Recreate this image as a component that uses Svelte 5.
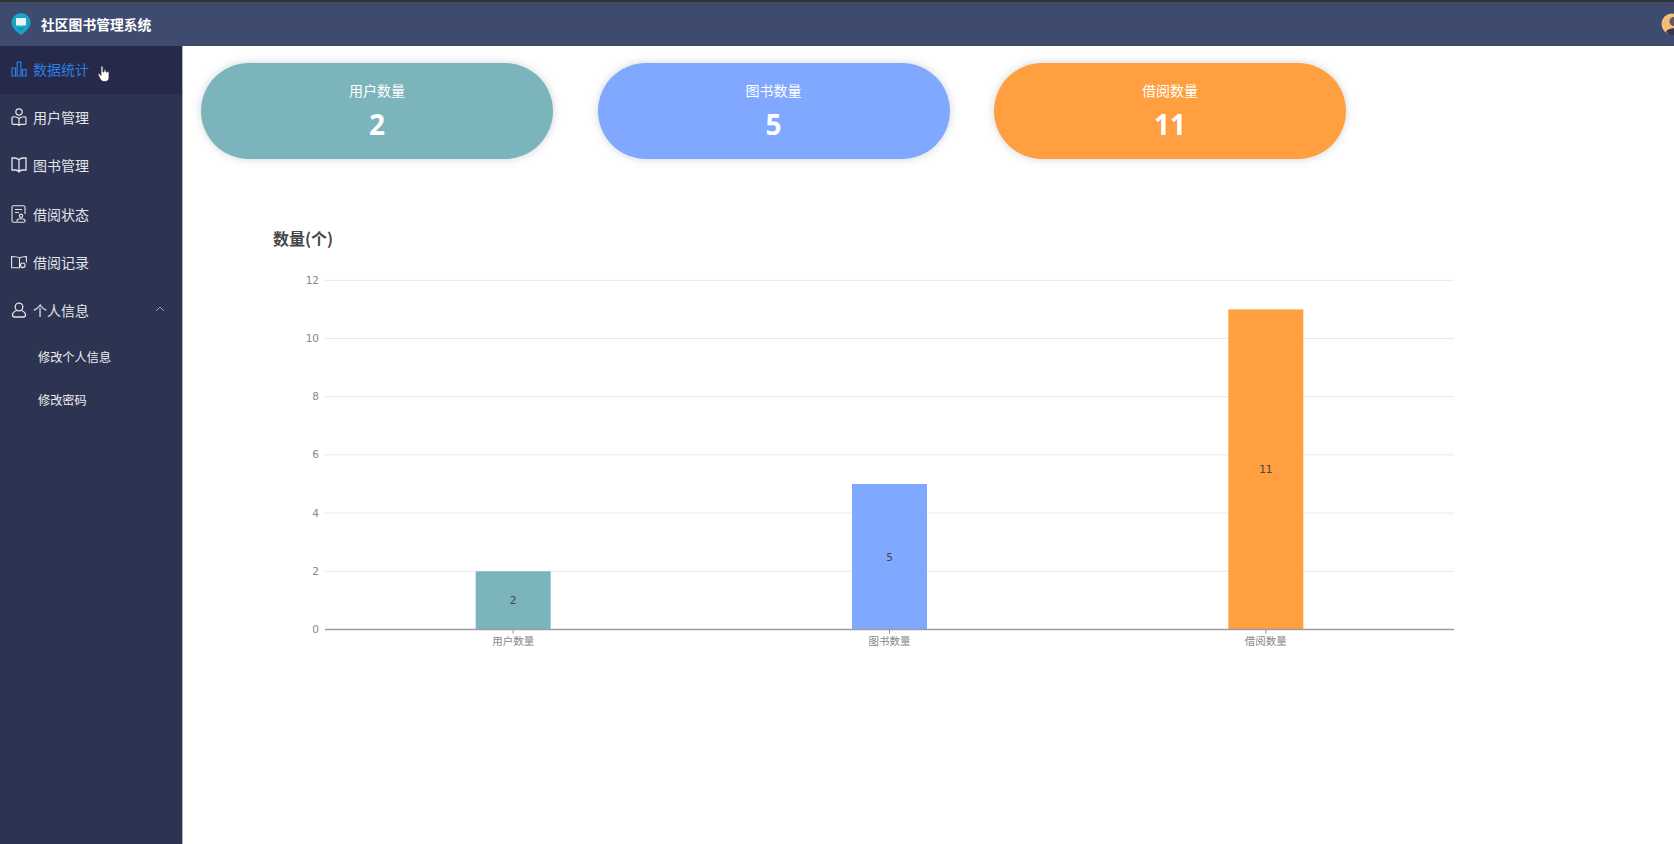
<script>
	const cards = [
		{ label: '用户数量', value: 2, color: '#7cb4bc' },
		{ label: '图书数量', value: 5, color: '#81a8ff' },
		{ label: '借阅数量', value: 11, color: '#ff9f40' }
	];

	const ticks = [0, 2, 4, 6, 8, 10, 12];
	const left = 124;
	const right = 1253;
	const base = 405.5;
	const unit = 29.1;
	const bar_width = 75;
	const slot = (right - left) / cards.length;

	const y_of = (v) => base - v * unit;
	const x_of = (i) => left + slot * (i + 0.5);
</script>

<div class="page">
	<header>
		<svg class="logo" width="22" height="24" viewBox="0 0 22 24">
			<path d="M11 1a9.500 9.500 0 0 1 9.500 9.500c0 5-5 9.500-9.500 12.500C6.500 20 1.500 15.500 1.500 10.500A9.500 9.500 0 0 1 11 1z" fill="#1ba3c6" />
			<path d="M6 6h4.700c.2 0 .3.200.3.300 0-.1.100-.3.300-.3H16v7.500h-4l-1 .7-1-.7H6z" fill="#e8f4f8" />
			<path d="M8.500 16h5l-2.500 2z" fill="#0e7fa0" />
		</svg>
		<span class="brand">社区图书管理系统</span>
		<svg class="avatar" width="22" height="22" viewBox="0 0 22 22">
			<circle cx="11" cy="11" r="10.500" fill="#f3bd78" />
			<circle cx="13" cy="8.500" r="4.500" fill="#6d5560" />
			<path d="M5 19c2-5 14-5 16 0l-4 3H9z" fill="#3b3350" />
		</svg>
	</header>

	<div class="body">
		<nav>
			<div class="item active">
				<svg viewBox="0 0 16 18" fill="none" stroke="currentColor" stroke-width="1.200">
					<path d="M1 8h3.500v8H1zM6.200 2.200h3.600V16H6.200zM11.500 9.500H15V16h-3.500z" />
				</svg>
				<span>数据统计</span>
				<svg class="hand" width="14" height="18" viewBox="0 0 14 18">
					<path d="M4 2c0-1.500 2-1.500 2 0v5l1 0V5.500c0-1 2-1 2 0V7l1 .2c0-1 2-.8 2 .3v5c0 2.500-1.500 4-4 4H7c-2 0-3-1.200-4-3L1.200 10c-.6-1.200.8-2 1.600-1L4 10.500z" fill="#fff" stroke="#333" stroke-width=".8" />
				</svg>
			</div>
			<div class="item">
				<svg viewBox="0 0 16 18" fill="none" stroke="currentColor" stroke-width="1.200">
					<circle cx="8" cy="4" r="3.200" />
					<path d="M8 10.500C6.200 9 4 8.600 2.200 8.800c-.8.100-1.200.5-1.200 1.200v5.200c0 .7.500 1.100 1.200 1.100H6c.8 0 1.500.4 2 1 .5-.6 1.200-1 2-1h3.800c.7 0 1.200-.4 1.200-1.100V10c0-.7-.4-1.100-1.200-1.200C12 8.600 9.800 9 8 10.500zM8 10.500V17" />
				</svg>
				<span>用户管理</span>
			</div>
			<div class="item">
				<svg viewBox="0 0 16 18" fill="none" stroke="currentColor" stroke-width="1.300">
					<path d="M8 3.800C6.800 2.600 5 2 3.500 2H1v12h3.500C6 14 7.200 14.600 8 15.800c.8-1.200 2-1.800 3.500-1.800H15V2h-3.500C10 2 9.200 2.600 8 3.800zM8 3.800v12" />
				</svg>
				<span>图书管理</span>
			</div>
			<div class="item">
				<svg viewBox="0 0 16 18" fill="none" stroke="currentColor" stroke-width="1.100">
					<path d="M6 17.300H2.500A1.500 1.500 0 0 1 1 15.800V2.200A1.500 1.500 0 0 1 2.500.700h10A1.500 1.500 0 0 1 14 2.200V9M4 4.500h7M4 7.500h4" />
					<circle cx="10" cy="10.800" r="1.700" />
					<path d="M6 15.300c.6-2 7.400-2 8 0 .4 1.200-.5 2-1.200 2H7.200c-.7 0-1.600-.8-1.200-2z" />
				</svg>
				<span>借阅状态</span>
			</div>
			<div class="item">
				<svg viewBox="0 0 16 18" fill="none" stroke="currentColor" stroke-width="1.100">
					<path d="M8.500 5C7 3.800 4 3.500.6 3.500v11.200h8.500M8.500 5c2-1.200 4-1.500 6.900-1.500v6M8.500 5v9.700" />
					<circle cx="11.800" cy="12.300" r="2.300" />
				</svg>
				<span>借阅记录</span>
			</div>
			<div class="item">
				<svg viewBox="0 0 16 18" fill="none" stroke="currentColor" stroke-width="1.300">
					<circle cx="8" cy="6" r="3.800" />
					<path d="M5.500 9.500C3 10.500 1.500 12 1.500 14c0 1.300.7 2 2 2h9c1.300 0 2-.7 2-2 0-2-1.500-3.500-4-4.500" />
				</svg>
				<span>个人信息</span>
				<svg class="chevron" width="10" height="6" viewBox="0 0 10 6" fill="none" stroke="currentColor" stroke-width="1">
					<path d="M1 5l4-4 4 4" />
				</svg>
			</div>
			<div class="sub">修改个人信息</div>
			<div class="sub">修改密码</div>
		</nav>

		<main>
			<section class="cards">
				{#each cards as card}
					<div class="card" style="background: {card.color}">
						<div class="label">{card.label}</div>
						<div class="value">{card.value}</div>
					</div>
				{/each}
			</section>

			<svg class="chart" width="1400" height="450" viewBox="0 0 1400 450">
				<text class="title" x="72" y="21">数量(个)</text>
				{#each ticks as t}
					{#if t > 0}
						<line x1={left} x2={right} y1={y_of(t)} y2={y_of(t)} stroke="#e6e9ec" />
					{/if}
					<text class="tick" x={left - 6} y={y_of(t) + 3.500} text-anchor="end">{t}</text>
				{/each}
				{#each cards as card, i}
					<rect x={x_of(i) - bar_width / 2} y={y_of(card.value)} width={bar_width} height={card.value * unit} fill={card.color} />
					<text class="bar-value" x={x_of(i)} y={y_of(card.value / 2) + 4} text-anchor="middle">{card.value}</text>
					<line x1={x_of(i)} x2={x_of(i)} y1={base} y2={base + 4} stroke="#8a8d99" />
					<text class="cat" x={x_of(i)} y={base + 15} text-anchor="middle">{card.label}</text>
				{/each}
				<line x1={left} x2={right} y1={base} y2={base} stroke="#9a9ca6" stroke-width="1.500" />
			</svg>
		</main>
	</div>
</div>

<style>
	:global(body) {
		margin: 0;
		overflow: hidden;
	}

	.page {
		height: 844px;
		display: flex;
		flex-direction: column;
		font-family: 'Noto Sans CJK SC', 'Noto Sans', sans-serif;
		background: #fff;
	}

	header {
		height: 44px;
		border-top: 2px solid #333;
		background: #3f4a6f;
		display: flex;
		align-items: center;
		padding-left: 10px;
		flex-shrink: 0;
		overflow: hidden;
	}

	.logo {
		flex-shrink: 0;
	}

	.brand {
		margin-left: 9px;
		color: #fff;
		font-size: 13.800px;
		font-weight: 700;
	}

	.avatar {
		margin-left: auto;
		margin-right: -9px;
		flex-shrink: 0;
	}

	.body {
		flex: 1;
		display: flex;
		min-height: 0;
	}

	nav {
		width: 182px;
		flex-shrink: 0;
		background: #2d3452;
		border-right: 1px solid #a9b4cc;
		color: #e4e4ea;
	}

	.item {
		position: relative;
		height: 48.200px;
		box-sizing: border-box;
		padding: 0 0 2px 11px;
		display: flex;
		align-items: center;
		font-size: 14px;
	}

	.item > svg:first-child {
		width: 16px;
		height: 18px;
		margin-right: 6px;
		flex-shrink: 0;
	}

	.active {
		background: #25294a;
		color: #2f7fe0;
	}

	.hand {
		position: absolute;
		left: 97px;
		top: 19px;
	}

	.chevron {
		position: absolute;
		left: 155px;
		top: 19px;
		color: #9aa0b5;
	}

	.sub {
		height: 43px;
		line-height: 44px;
		padding-left: 38px;
		font-size: 12.200px;
		color: #eee;
	}

	main {
		flex: 1;
		min-width: 0;
		padding: 17px 0 0 18px;
	}

	.cards {
		display: flex;
		gap: 44.500px;
	}

	.card {
		width: 352px;
		height: 96px;
		border-radius: 48px;
		box-shadow: 0 0 8px rgba(100, 110, 130, 0.3);
		color: #fff;
		display: flex;
		flex-direction: column;
		align-items: center;
		padding-top: 17px;
		box-sizing: border-box;
	}

	.label {
		font-size: 14px;
		line-height: 20px;
	}

	.value {
		font-family: 'Open Sans', sans-serif;
		font-size: 28px;
		font-weight: 700;
		line-height: 38px;
		margin-top: 5px;
	}

	.chart {
		display: block;
		margin: 65px 0 0 0;
	}

	.title {
		font-size: 16px;
		font-weight: 700;
		fill: #464646;
	}

	.tick {
		font-family: 'DejaVu Sans', sans-serif;
		font-size: 10.500px;
		fill: #888;
	}

	.bar-value {
		font-family: 'DejaVu Sans', sans-serif;
		font-size: 10.500px;
		fill: #444;
	}

	.cat {
		font-size: 10.500px;
		fill: #888;
	}
</style>
